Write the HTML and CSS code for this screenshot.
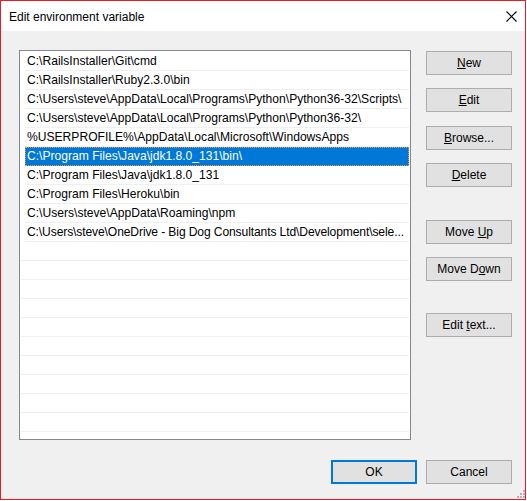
FILE: index.html
```html
<!DOCTYPE html>
<html lang="en">
<head>
	<meta charset="UTF-8">
	<title>Edit environment variable</title>
	<link rel="stylesheet" href="styles.css">
</head>
<body>
	<div class="window">
		<div class="titlebar">
			<span class="title">Edit environment variable</span>
			<span class="close">
				<svg width="11" height="11" viewBox="0 0 11 11"><path d="M0.5 0.5 L10.5 10.5 M10.5 0.5 L0.5 10.5" stroke="#000" stroke-width="1.1" fill="none"/></svg>
			</span>
		</div>
		<div class="content">
			<div class="main">
				<div class="list">
					<div class="item">C:\RailsInstaller\Git\cmd</div>
					<div class="item">C:\RailsInstaller\Ruby2.3.0\bin</div>
					<div class="item">C:\Users\steve\AppData\Local\Programs\Python\Python36-32\Scripts\</div>
					<div class="item">C:\Users\steve\AppData\Local\Programs\Python\Python36-32\</div>
					<div class="item">%USERPROFILE%\AppData\Local\Microsoft\WindowsApps</div>
					<div class="item selected">C:\Program Files\Java\jdk1.8.0_131\bin\</div>
					<div class="item">C:\Program Files\Java\jdk1.8.0_131</div>
					<div class="item">C:\Program Files\Heroku\bin</div>
					<div class="item">C:\Users\steve\AppData\Roaming\npm</div>
					<div class="item long">C:\Users\steve\OneDrive - Big Dog Consultants Ltd\Development\sele...</div>
					<div class="empty"></div>
					<div class="empty"></div>
					<div class="empty"></div>
					<div class="empty"></div>
					<div class="empty"></div>
					<div class="empty"></div>
					<div class="empty"></div>
					<div class="empty"></div>
					<div class="empty"></div>
					<div class="empty"></div>
				</div>
				<div class="buttons">
					<button class="btn"><u>N</u>ew</button>
					<button class="btn wide-after"><u>E</u>dit</button>
					<button class="btn"><u>B</u>rowse...</button>
					<button class="btn group-after"><u>D</u>elete</button>
					<button class="btn">Move <u>U</u>p</button>
					<button class="btn group-after-2">Move D<u>o</u>wn</button>
					<button class="btn">Edit <u>t</u>ext...</button>
				</div>
			</div>
			<div class="footer">
				<button class="btn default">OK</button>
				<button class="btn">Cancel</button>
			</div>
			<span class="grip">
				<svg width="8" height="8" viewBox="0 0 8 8" fill="#b4b4b4">
					<rect x="6" y="0" width="2" height="2"/>
					<rect x="3" y="3" width="2" height="2"/>
					<rect x="6" y="3" width="2" height="2"/>
					<rect x="0" y="6" width="2" height="2"/>
					<rect x="3" y="6" width="2" height="2"/>
					<rect x="6" y="6" width="2" height="2"/>
				</svg>
			</span>
		</div>
	</div>
</body>
</html>
```

FILE: styles.css
```css
body {
	margin:0;
	background-color:#fff;
	font-family:"Liberation Sans", Arial, sans-serif;
	font-size:12px;
	color:#000;
}

.window {
	width:526px;
	height:500px;
	box-sizing:border-box;
	border:1px solid #e81c24;
	display:flex;
	flex-direction:column;
}
.titlebar {
	height:30px;
	background-color:#fff;
	display:flex;
	align-items:center;
	justify-content:space-between;
	padding:0 8px 0 8px;
	flex-shrink:0;
}
.title {
	font-size:12px;
	padding-top:1px;
}
.close {
	display:flex;
	width:11px;
	height:11px;
	margin-top:1px;
}
.content {
	flex:1;
	background-color:#f0f0f0;
	padding:19px 0 0 18px;
	position:relative;
}
.main {
	display:flex;
}
.list {
	width:392px;
	height:390px;
	box-sizing:border-box;
	border:1px solid #828790;
	background-color:#fff;
	padding:1px 0 0 1px;
	overflow:hidden;
}
.item {
	height:18px;
	line-height:18px;
	margin-left:4px;
	padding-left:2px;
	border-bottom:1px solid #f0f0f0;
	white-space:nowrap;
	width:382px;
	font-size:12.1px;
}
.item.long {
	letter-spacing:-0.12px;
}
.item.selected {
	background-color:#0078d7;
	color:#fff;
	box-sizing:border-box;
	border:1px dotted #f8962e;
	height:19px;
	line-height:17px;
	padding-left:1px;
	width:384px;
}
.empty {
	height:18px;
	border-bottom:1px solid #f0f0f0;
	width:388px;
}
.buttons {
	display:flex;
	flex-direction:column;
	margin-left:15px;
	padding-top:1px;
}
.btn {
	width:86px;
	height:24px;
	box-sizing:border-box;
	background-color:#e1e1e1;
	border:1px solid #adadad;
	font-family:"Liberation Sans", Arial, sans-serif;
	font-size:12px;
	color:#000;
	padding:0;
	margin:0 0 13px 0;
}
.btn.wide-after {
	margin-bottom:14px;
}
.btn.group-after {
	margin-bottom:33px;
}
.btn.group-after-2 {
	margin-bottom:32px;
}
.footer {
	display:flex;
	justify-content:flex-end;
	gap:9px;
	margin-top:20px;
	padding-right:13px;
}
.footer .btn {
	margin:0;
}
.btn.default {
	border:2px solid #0078d7;
}
.grip {
	position:absolute;
	right:0;
	bottom:1px;
	display:flex;
}
```
